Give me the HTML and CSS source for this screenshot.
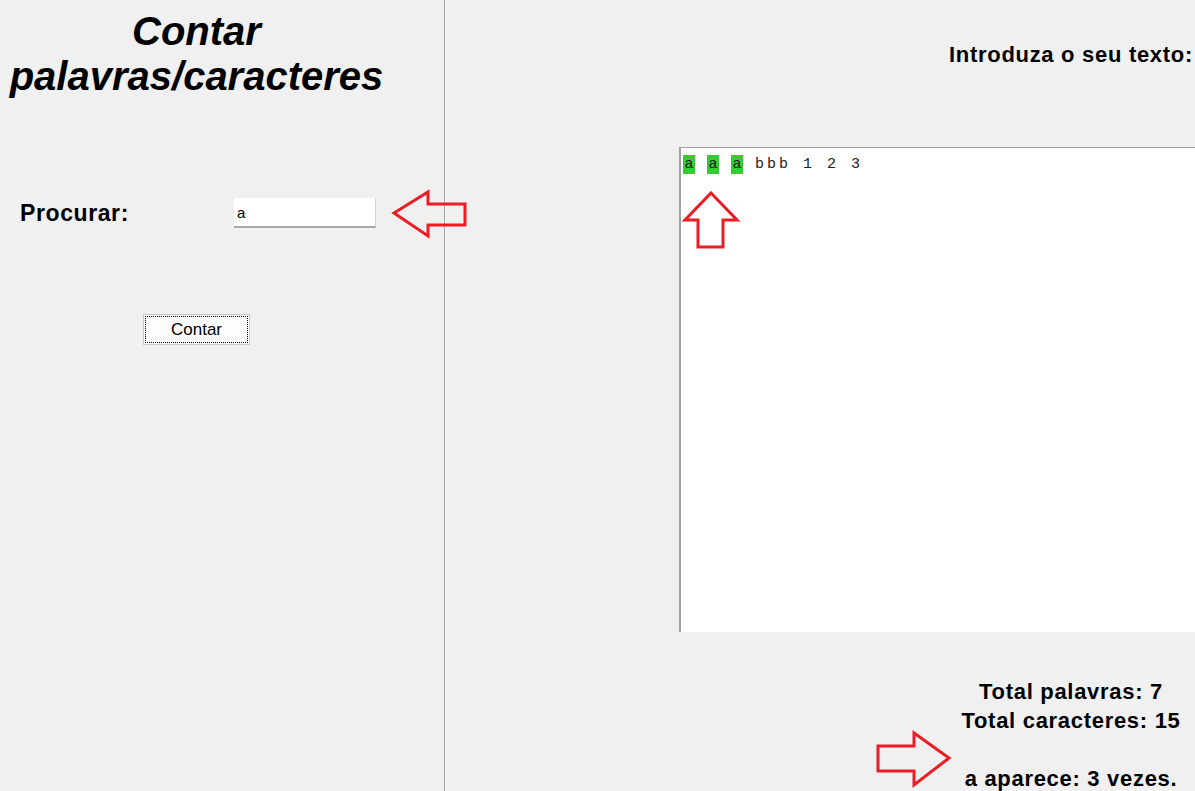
FILE: index.html
```html
<!DOCTYPE html>
<html lang="pt">
<head>
<meta charset="utf-8">
<title>Contar palavras/caracteres</title>
<link rel="stylesheet" href="styles.css">
</head>
<body>
<div class="app">
  <div class="left">
    <h1 class="title">Contar<br>palavras/caracteres</h1>
    <div class="search-row">
      <label class="search-label" for="q">Procurar:</label>
      <input class="search-input" id="q" type="text" value="a">
    </div>
    <div class="btn-wrap">
      <button class="btn" type="button">Contar</button>
    </div>
  </div>
  <div class="divider"></div>
  <div class="right">
    <div class="heading">Introduza o seu texto:</div>
    <div class="textbox"><span class="hl">a</span> <span class="hl">a</span> <span class="hl">a</span> bbb 1 2 3</div>
    <div class="results">Total palavras: 7<br>Total caracteres: 15<br><br>a aparece: 3 vezes.</div>
  </div>
</div>
<svg class="overlay" width="1195" height="791" viewBox="0 0 1195 791" aria-hidden="true">
  <polygon points="394,213 428,192 428,204 465,204 465,225 428,225 428,236" />
  <polygon points="711,193 737,220 723,220 723,247 698,247 698,220 685,220" />
  <polygon points="878,746 914,746 914,733 949,758 914,785 914,771 878,771" />
</svg>
</body>
</html>
```

FILE: styles.css
```css
html, body {
  margin: 0;
  padding: 0;
  background: #f0f0f0;
  overflow: hidden;
  width: 1195px;
  height: 791px;
}

body {
  position: relative;
  font-family: "Liberation Sans", Arial, sans-serif;
  color: #000;
}

.app {
  display: flex;
  height: 791px;
  overflow: hidden;
}

.left {
  width: 444px;
  flex: none;
  display: flex;
  flex-direction: column;
}

.left > * {
  flex: none;
}

.title {
  width: 393px;
  margin: 9px 0 0 0;
  font-size: 40px;
  line-height: 45px;
  font-style: italic;
  font-weight: bold;
  text-align: center;
}

.search-row {
  display: flex;
  align-items: center;
  margin-top: 99px;
  padding-left: 20px;
  height: 30px;
}

.search-label {
  width: 214px;
  font-size: 23px;
  letter-spacing: 0.6px;
  font-weight: bold;
  line-height: 27px;
}

.search-input {
  box-sizing: border-box;
  width: 142px;
  height: 30px;
  margin: 0;
  padding: 0 3px;
  border: none;
  border-bottom: 2px solid #a9a9a9;
  border-right: 1px solid #d6d6d6;
  background: #fff;
  font-family: "Liberation Sans", Arial, sans-serif;
  font-size: 15px;
  color: #000;
  outline: none;
}

.btn-wrap {
  width: 393px;
  display: flex;
  justify-content: center;
  margin-top: 86px;
}

.btn {
  box-sizing: border-box;
  width: 107px;
  height: 31px;
  margin: 0;
  padding: 0;
  background: #fdfdfd;
  border: 1px solid #c8c8c8;
  outline: 1px dotted #000;
  outline-offset: -3px;
  font-family: "Liberation Sans", Arial, sans-serif;
  font-size: 17px;
  color: #000;
}

.divider {
  width: 1px;
  flex: none;
  background: #a0a0a0;
  border-right: 1px solid #fafafa;
}

.right {
  width: 1250px;
  flex: none;
  display: flex;
  flex-direction: column;
  align-items: center;
  padding-top: 41px;
}

.right > * {
  flex: none;
}

.heading {
  font-size: 22px;
  letter-spacing: 0.7px;
  font-weight: bold;
  line-height: 28px;
  white-space: nowrap;
}

.textbox {
  box-sizing: border-box;
  width: 784px;
  height: 485px;
  margin-top: 78px;
  padding: 7px 2px 0 2px;
  background: #fff;
  border-top: 1px solid #a0a0a0;
  border-left: 2px solid #a0a0a0;
  font-family: "Liberation Mono", "Courier New", monospace;
  font-size: 15px;
  letter-spacing: 3px;
  line-height: 19px;
  color: #222;
  white-space: pre;
}

.hl {
  display: inline-block;
  width: 12px;
  height: 19px;
  vertical-align: top;
  background: #33cc33;
  letter-spacing: 0;
  text-align: center;
}

.results {
  margin-top: 45px;
  font-size: 22px;
  letter-spacing: 0.7px;
  font-weight: bold;
  line-height: 29px;
  text-align: center;
  white-space: nowrap;
}

.overlay {
  position: absolute;
  left: 0;
  top: 0;
  pointer-events: none;
}

.overlay polygon {
  fill: none;
  stroke: #ed1c24;
  stroke-width: 3;
  stroke-linejoin: miter;
}
```
